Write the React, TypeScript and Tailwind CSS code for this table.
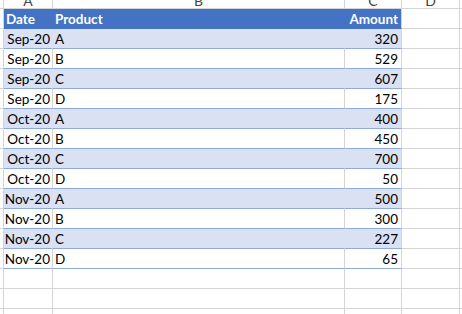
import { twMerge } from "tailwind-merge";

type Row = { date: string; product: string; amount: number };

const rows: Row[] = [
    { date: "Sep-20", product: "A", amount: 320 },
    { date: "Sep-20", product: "B", amount: 529 },
    { date: "Sep-20", product: "C", amount: 607 },
    { date: "Sep-20", product: "D", amount: 175 },
    { date: "Oct-20", product: "A", amount: 400 },
    { date: "Oct-20", product: "B", amount: 450 },
    { date: "Oct-20", product: "C", amount: 700 },
    { date: "Oct-20", product: "D", amount: 50 },
    { date: "Nov-20", product: "A", amount: 500 },
    { date: "Nov-20", product: "B", amount: 300 },
    { date: "Nov-20", product: "C", amount: 227 },
    { date: "Nov-20", product: "D", amount: 65 },
];

// cell base: 19px body + 1px gridline underneath
const cell = "h-[20px] shrink-0 border-b border-r border-[#d4d4d4] leading-[20px] overflow-hidden whitespace-nowrap";

function Gutter() {
    return <div className={twMerge(cell, "w-[4px]")} />;
}

function Spare() {
    return (
        <>
            <div className={twMerge(cell, "w-[58px]")} />
            <div className={twMerge(cell, "flex-1 border-r-0")} />
        </>
    );
}

function App() {
    return (
        <div className="w-[462px] h-[314px] bg-white overflow-hidden text-[13.5px] text-black" style={{ fontFamily: "Lato, 'Liberation Sans', sans-serif" }}>
            {/* column letters, mostly scrolled off */}
            <div className="flex h-[9px] text-[#444] text-[14px] leading-[9px]">
                <div className="w-[4px] h-[9px] border-r border-b border-[#d4d4d4]" />
                <div className="w-[49px] h-[9px] border-r border-b border-[#d4d4d4] text-center overflow-hidden"><span className="relative top-[-4px]">A</span></div>
                <div className="w-[292px] h-[9px] border-r border-b border-[#d4d4d4] text-center overflow-hidden"><span className="relative top-[-4px]">B</span></div>
                <div className="w-[57px] h-[9px] border-r border-b border-[#d4d4d4] text-center overflow-hidden"><span className="relative top-[-4px]">C</span></div>
                <div className="w-[58px] h-[9px] border-r border-b border-[#d4d4d4] text-center overflow-hidden"><span className="relative top-[-4px]">D</span></div>
                <div className="flex-1 h-[9px] border-b border-[#d4d4d4]" />
            </div>

            {/* table header */}
            <div className="flex">
                <Gutter />
                <div className={twMerge(cell, "w-[49px] bg-[#4472c4] border-[#4472c4] text-white font-bold pl-[2px]")}>Date</div>
                <div className={twMerge(cell, "w-[292px] bg-[#4472c4] border-[#4472c4] text-white font-bold pl-[2px]")}>Product</div>
                <div className={twMerge(cell, "w-[57px] bg-[#4472c4] border-b-[#4472c4] text-white font-bold text-right pr-[3px]")}>Amount</div>
                <Spare />
            </div>

            {rows.map((r, i) => {
                const band = i % 2 === 0;
                return (
                    <div key={i} className="flex">
                        <Gutter />
                        <div className={twMerge(cell, "w-[49px] border-b-[#8ea9db] text-right pr-[2px]", band && "bg-[#d9e1f2] border-r-[#d9e1f2]")}>{r.date}</div>
                        <div className={twMerge(cell, "w-[292px] border-b-[#8ea9db] pl-[2px]", band && "bg-[#d9e1f2] border-r-[#d9e1f2]")}>{r.product}</div>
                        <div className={twMerge(cell, "w-[57px] border-b-[#8ea9db] text-right pr-[3px]", band && "bg-[#d9e1f2]")}>{r.amount}</div>
                        <Spare />
                    </div>
                );
            })}

            {Array.from({ length: 3 }, (_, i) => (
                <div key={i} className="flex">
                    <Gutter />
                    <div className={twMerge(cell, "w-[49px]")} />
                    <div className={twMerge(cell, "w-[292px]")} />
                    <div className={twMerge(cell, "w-[57px]")} />
                    <Spare />
                </div>
            ))}
        </div>
    );
}

export default App;
